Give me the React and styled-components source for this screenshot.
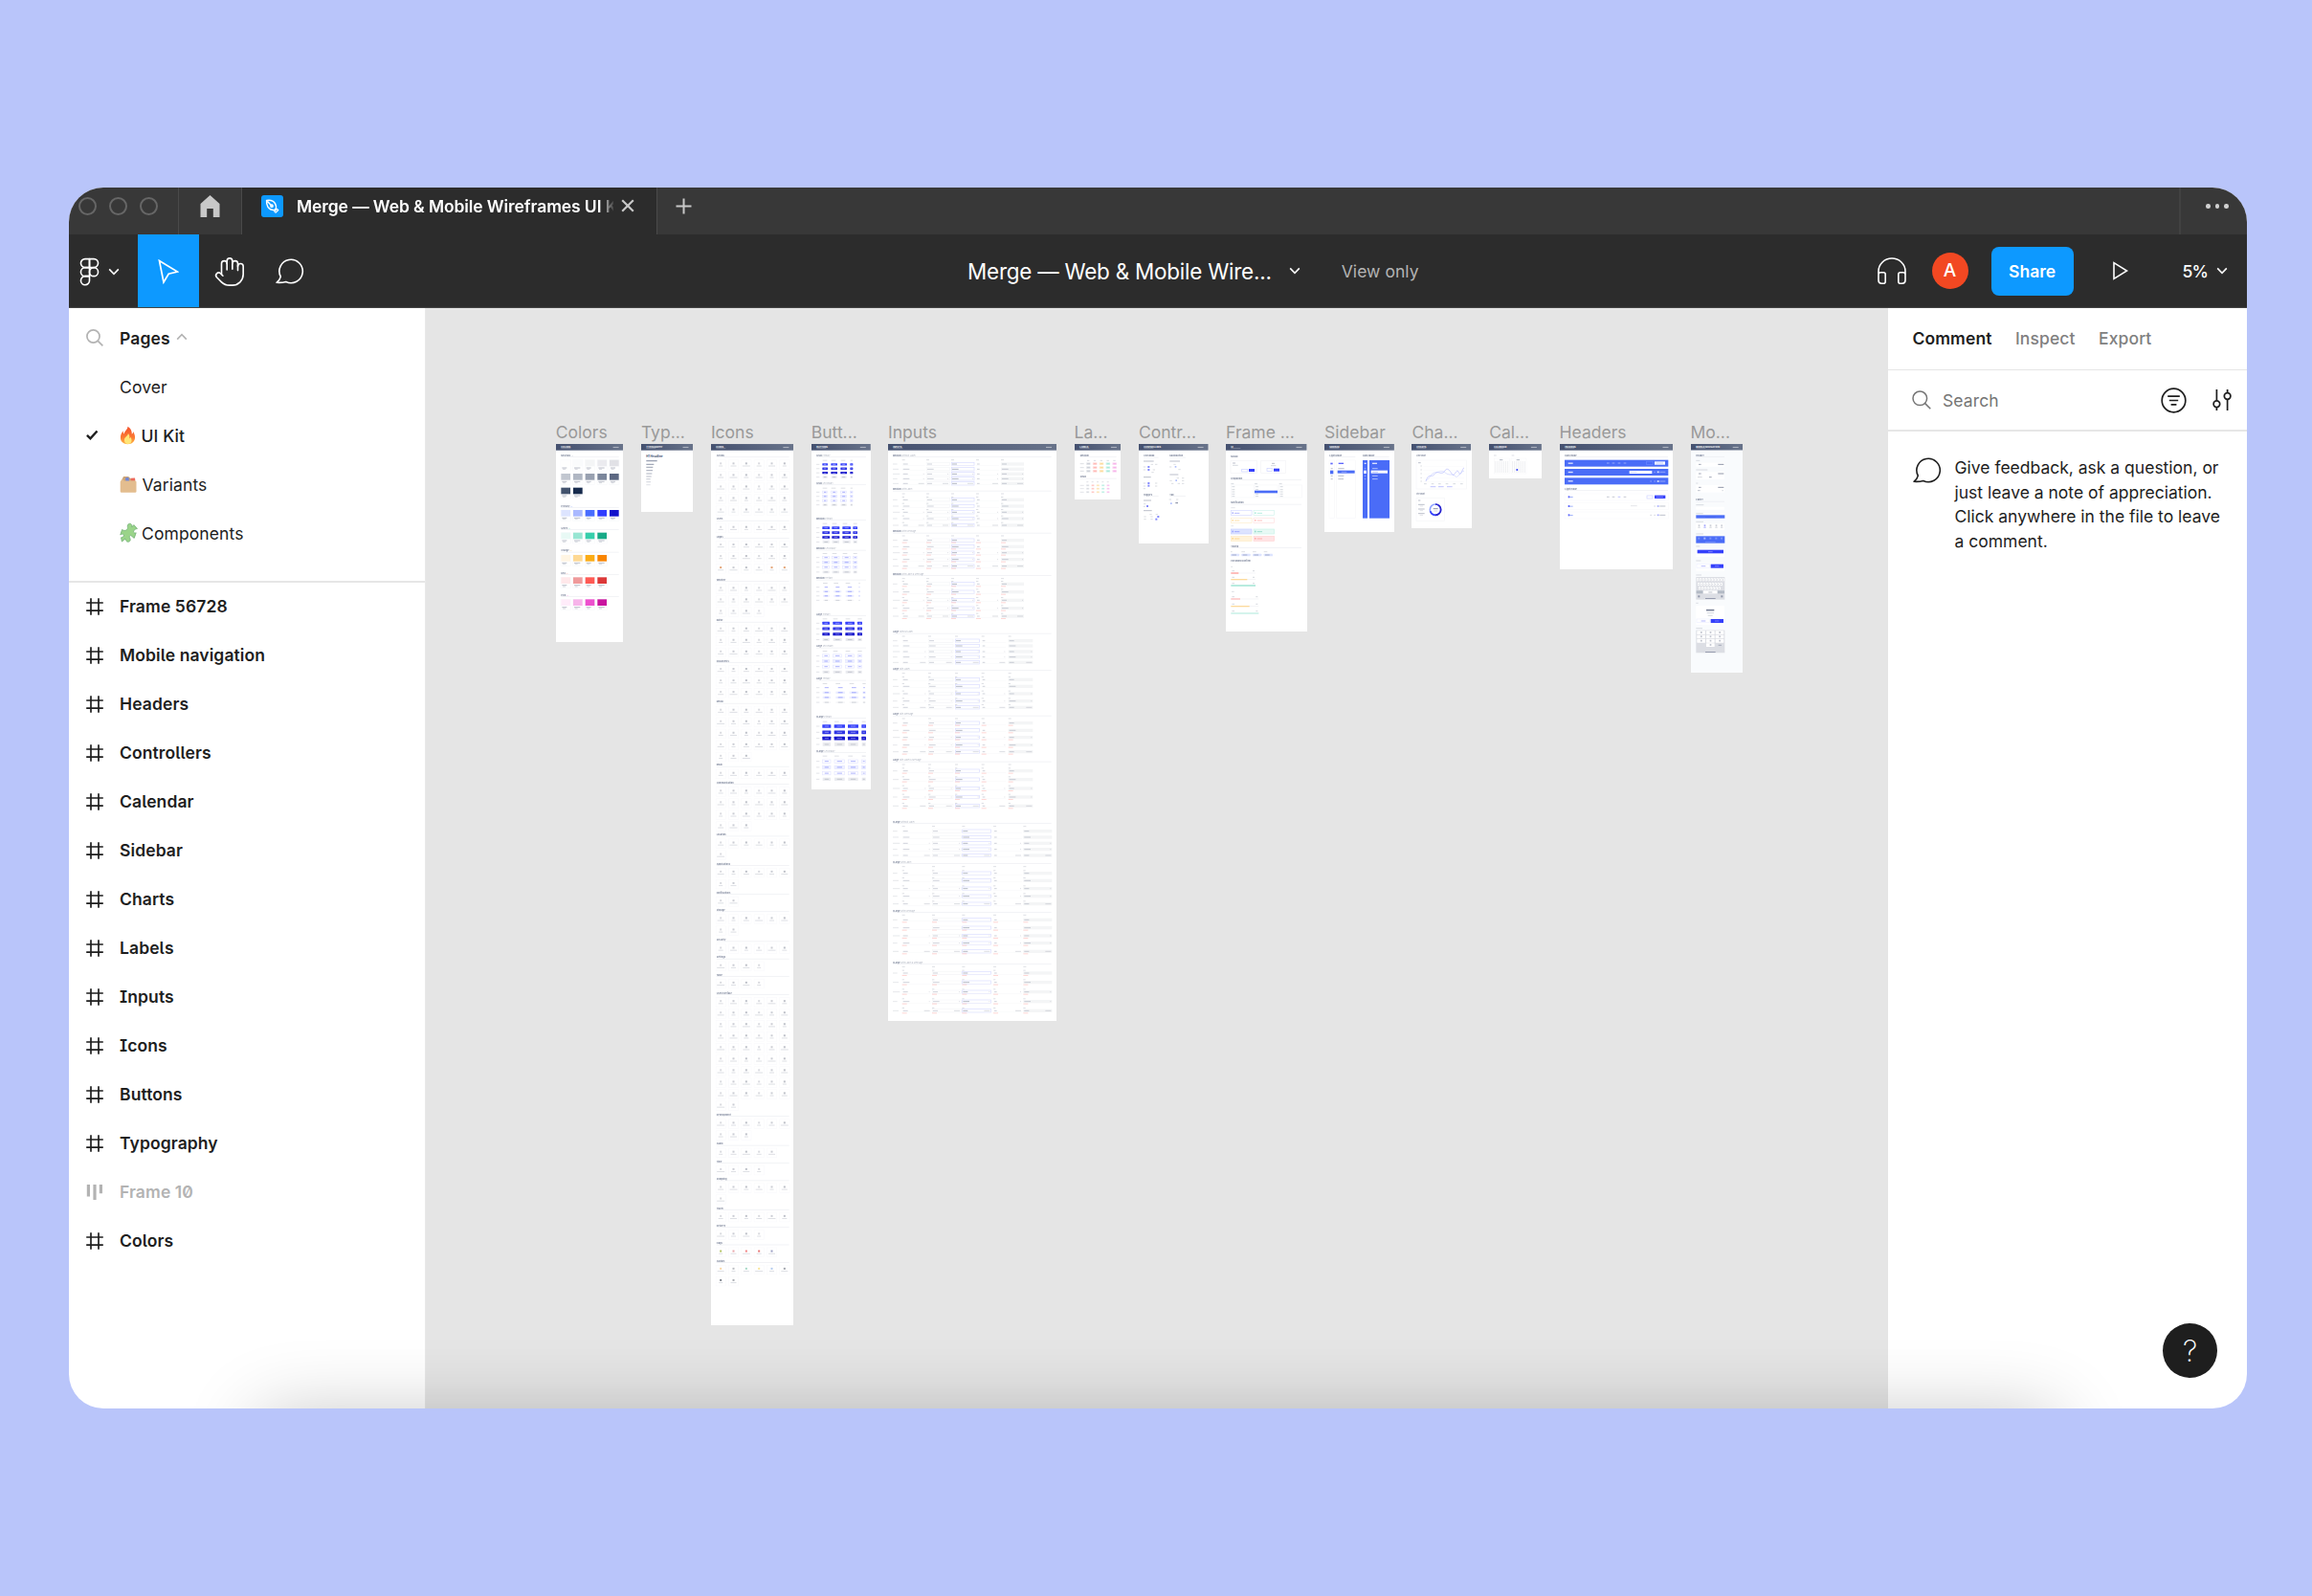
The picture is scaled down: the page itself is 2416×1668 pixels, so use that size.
import React from "react";
import styled, { createGlobalStyle } from "styled-components";
import { Figma, Hand } from "lucide-react";

const GlobalStyle = createGlobalStyle`
  * { box-sizing: border-box; }
  body {
    margin: 0;
    background: #b9c5fa;
    font-family: Inter, "Liberation Sans", sans-serif;
    font-size: 17.5px;
    color: #1e1e1e;
  }
  svg { display: block; flex: none; }
`;

/* ---------- data ---------- */

const pages = [
  { name: "Cover" },
  { name: "UI Kit", icon: "fire", current: true },
  { name: "Variants", icon: "box" },
  { name: "Components", icon: "puzzle" },
];

const layers = [
  "Frame 56728", "Mobile navigation", "Headers", "Controllers", "Calendar", "Sidebar", "Charts",
  "Labels", "Inputs", "Icons", "Buttons", "Typography", "Frame 10", "Colors",
];

const blue = "#4a6cf7";
const royal = "#3540fb";
const navy = "#1414cc";
const ink = "#44506f";

// section name, top, swatches
const swatches = [
  ["Primary", 297, 309, ["#dde4ff", "#aab9ff", "#486cff", "#313dff", "#1111cc"], "#486cff"],
  ["Green", 367, 380, ["#e8f9f5", "#98e6d3", "#36cfab", "#17aa87"], "#36cfab"],
  ["Orange", 437, 450, ["#fff5e3", "#fed993", "#fbac15", "#f98500"], "#fbac15"],
  ["Red", 507, 520, ["#ffe8ea", "#ef9a9b", "#ff5a54", "#dc3838"], "#ff5a54"],
  ["Pink", 576, 589, ["#ffecfa", "#f7b5ea", "#ed50ce", "#c9149f"], "#ed50ce"],
];

// section name, y of the heading, number of icons
const iconSections = [
  ["Arrows", 12.3, 30], ["Users", 78.7, 6], ["Logos", 97, 18], ["Weather", 142.3, 16],
  ["Editor", 184.7, 18], ["Documents", 227, 18], ["Media", 269.7, 27], ["Email", 335.7, 6],
  ["Communication", 354.3, 21], ["Location", 408.5, 7], ["Applications", 438.9, 8],
  ["Notifications", 469.2, 2], ["Storage", 487.4, 8], ["Security", 518.5, 6], ["Settings", 536.7, 4],
  ["Table", 554.9, 4], ["User interface", 574.2, 56], ["Development", 701.4, 9], ["Audio", 731.7, 5],
  ["Time", 749.9, 4], ["Shopping", 768.5, 7], ["Travel", 798.9, 6], ["Delivery", 817.4, 4],
  ["Flags", 835.6, 5], ["Avatars", 853.9, 8],
];
const flagColors = ["#9ab030", "#e08a8f", "#ec5a5a", "#e04848", "#7a7fb0"];
const avatarColors = ["#f8ca88", "#a5a8ad", "#86cbb2", "#f6dc78", "#98b8ea", "#808590", "#555b68", "#8c9098"];

const smallCols = [[897, 15], [924, 18], [954, 18], [984, 7]];
const midCols = [[897, 21], [927, 22], [960, 24], [993, 12]];
const bigCols = [[897, 21], [930, 27], [969, 27], [1007, 13]];
const textCols = [[897, 25], [938, 29], [981, 28], [1022, 10]];
const hugeCols = [[897, 25], [934, 32], [977, 31], [1020, 12]];
const buttonGroups = [
  ["Small", "Primary", 139, 166, 13.3, 7, smallCols, "solid"],
  ["Small", "Secondary", 226, 253, 13.3, 7, smallCols, "line"],
  ["Medium", "Primary", 337, 365, 14.8, 8, midCols, "solid"],
  ["Medium", "Secondary", 431, 458, 15.2, 8, midCols, "line"],
  ["Medium", "Tertiary", 524, 551, 13.7, 4, [[898, 20], [932, 24], [969, 26], [1010, 4]], "text"],
  ["Large", "Primary", 636, 664, 17.2, 9, bigCols, "solid"],
  ["Large", "Secondary", 737, 766, 17, 9, bigCols, "line"],
  ["Large", "Tertiary", 839, 866, 15.4, 5, textCols, "text"],
  ["XLarge", "Primary", 958, 987, 19, 11, hugeCols, "solid"],
  ["XLarge", "Secondary", 1066, 1097, 18.7, 10, hugeCols, "line"],
];

const inCols = {
  Medium: [98, 174, 252, 330, 408, 72],
  Large: [98, 180, 264, 347, 431, 77],
  XLarge: [98, 192, 286, 384, 478, 90],
};
// size, note, heading y, field rows, has label, has message
const inputGroups = [
  ["Medium", "Without Label", 139, [165, 181, 196, 211, 226], 0, 0],
  ["Medium", "With Label", 245, [277, 297, 316, 336, 357], 1, 0],
  ["Medium", "With Message", 377, [404, 424, 443, 464, 485], 0, 1],
  ["Medium", "With Label & Message", 511, [541, 566, 592, 617, 642], 1, 1],
  ["Large", "Without Label", 692, [719, 735, 753, 770, 787], 0, 0],
  ["Large", "With Label", 808, [841, 862, 885, 908, 928], 1, 0],
  ["Large", "With Message", 950, [977, 1000, 1022, 1046, 1067], 0, 1],
  ["Large", "With Label & Message", 1094, [1127, 1154, 1182, 1209, 1237], 1, 1],
  ["XLarge", "Without Label", 1288, [1316, 1335, 1354, 1373, 1392], 0, 0],
  ["XLarge", "With Label", 1414, [1448, 1471, 1496, 1520, 1544], 1, 0],
  ["XLarge", "With Message", 1566, [1594, 1619, 1644, 1667, 1693], 0, 1],
  ["XLarge", "With Label & Message", 1728, [1761, 1790, 1820, 1850, 1879], 1, 1],
];

/* ---------- board thumbnails, drawn at 3 units per pixel ---------- */

const R = ({ x, y, w, h, c, r = 0, line, o }) => (
  <rect x={x} y={y} width={w} height={h} rx={r} fill={c || "none"} stroke={line} strokeWidth={line ? 2 : 0} opacity={o} />
);
// a run of copy too small to read
const Copy = ({ x, y, w, c = "#8e95a6", o = 0.36, h = 3 }) => <rect x={x} y={y - h / 2} width={w} height={h} fill={c} opacity={o} />;

const Head = ({ x, y, children, note, to, size = 7, c }) => (
  <>
    <text x={x} y={y + 2} fontSize={size} fontWeight="700" fill={ink} opacity="0.7">
      {children}
      {note && <tspan fontWeight="400" fill={c || "#8e95a6"}> {note}</tspan>}
    </text>
    {to && <rect x={x} y={y + 3.5} width={to - x} height="1.6" fill="#e6e8ee" />}
  </>
);

const ColorsBoard = () => {
  const card = (c, x, y, i) => (
    <g key={x + "-" + y}>
      <R x={x} y={y} w={31} h={34} c="#fff" line="#f8f9fb" />
      <R x={x + 1} y={y} w={29} h={20} c={c} />
      <Copy x={x + 4} y={y + 25} w={15 + (i % 2) * 4} c={ink} />
      <Copy x={x + 6} y={y + 29} w={9} />
    </g>
  );
  return (
    <>
      <Head x={77} y={139} to={258} note="—">Neutrals</Head>
      {["#fefefe", "#fafbfc", "#f4f5f6", "#ebebef", "#e1e1e6"].map((c, i) => card(c, 76 + i * 38, 152, i))}
      {["#c1c6d0", "#b0b7c3", "#98a0b0", "#7b869b", "#5c6882"].map((c, i) => card(c, 76 + i * 38, 195, i))}
      {["#42526d", "#172b4d"].map((c, i) => card(c, 76 + i * 38, 239, i))}
      {swatches.map(([name, y, top, list, tone]) => (
        <g key={name}>
          <Head x={77} y={y} to={258} note="—" c={tone}>{name}</Head>
          {list.map((c, i) => card(c, 76 + i * 38, top, i))}
        </g>
      ))}
    </>
  );
};

const TypeBoard = () => (
  <>
    <text x="345" y="144" fontSize="9" fontWeight="700" fill={ink}>H1 Headline</text>
    {[[155, 34], [166, 24], [175, 21], [185, 20], [195, 18], [204, 16], [212, 13], [221, 14], [230, 13]].map(([y, w], i) => (
      <Copy key={y} x={345} y={y} w={w} h={3.4} c={ink} o={0.6 - i * 0.055} />
    ))}
  </>
);

const IconsBoard = () => (
  <>
    {iconSections.map(([name, top, count]) => {
      const y = top * 3 + 102;
      return (
        <g key={name}>
          <Head x={564} y={y} to={792}>{name}</Head>
          {Array.from({ length: count }, (_, i) => {
            const cx = 577.5 + (i % 6) * 40;
            const cy = y + 27 + Math.floor(i / 6) * 36.1;
            let tone = "#666d80";
            if (name === "Flags") tone = flagColors[i];
            if (name === "Avatars") tone = avatarColors[i];
            if (name === "Logos" && (i === 12 || i === 16 || i === 17)) tone = "#d9854a";
            const w = 12 + ((i * 7 + count) % 5) * 3;
            return (
              <g key={i}>
                <R x={cx - 15} y={cy - 14} w={31} h={29} c="#fff" line="#fafafc" />
                <R x={cx - 3} y={cy - 6} w={6} h={6} c={tone} o={tone === "#666d80" ? 0.25 + (i % 3) * 0.09 : 0.75} />
                <Copy x={cx - w / 2} y={cy + 5} w={w} o={0.3} />
              </g>
            );
          })}
        </g>
      );
    })}
  </>
);

const ButtonsBoard = () => (
  <>
    {buttonGroups.map(([size, kind, top, first, step, h, cols, look]) => (
      <g key={size + kind}>
        <Head x={877} y={top} to={1033} note={kind} size={6.6}>{size}</Head>
        {cols.map(([x, w]) => <Copy key={x} x={x} y={top + 14.5} w={Math.min(w, 14)} o={0.3} />)}
        {[0, 1, 2, 3].map((row) => {
          const y = first + row * step;
          return (
            <g key={row}>
              <Copy x={877} y={y} w={10} o={0.25} />
              {cols.map(([x, w]) => {
                const inner = <Copy x={x + w * 0.25} y={y} w={w * 0.5} c={look === "solid" && row < 3 ? "#fff" : row === 3 ? "#8e95a6" : royal} o={0.4} />;
                if (row === 3) return <g key={x}><R x={x} y={y - h / 2} w={w} h={h} c={look === "text" ? "#f7f7f9" : "#eaebef"} />{inner}</g>;
                if (look === "solid") return <g key={x}><R x={x - 1} y={y - h / 2} w={w + 2} h={h} r={1} c={[royal, "#3036e6", navy][row]} />{inner}</g>;
                if (look === "line") return <g key={x}><R x={x} y={y - h / 2} w={w} h={h} c={row === 1 ? "#eef0ff" : "#fff"} line="#e4e6ff" />{inner}</g>;
                return <g key={x}><R x={x} y={y - h / 2 - 1} w={w} h={h + 2} c={row ? "#eceeff" : "#fff"} />{inner}</g>;
              })}
            </g>
          );
        })}
      </g>
    ))}
  </>
);

const InputsBoard = () => (
  <>
    {inputGroups.map(([size, note, top, rows, label, message]) => {
      const w = inCols[size][5];
      const xs = inCols[size].slice(0, 5);
      return (
        <g key={size + note}>
          <Head x={69} y={top} to={566} note={note} size={6.6}>{size}</Head>
          {xs.map((x) => <Copy key={x} x={x} y={top + 13} w={9} o={0.3} />)}
          {rows.map((y, r) => (
            <g key={y}>
              <Copy x={69} y={y} w={14 + (r % 3) * 4} o={0.22} />
              {xs.map((x, i) => (
                <g key={x}>
                  {i === 1 && <R x={x + 1} y={y - 5} w={w} h={10} line="#f5f6f8" />}
                  {i === 2 && <R x={x + 1} y={y - 5} w={w - 1} h={10} c="#fff" line="#d9dcff" />}
                  {i === 4 && <R x={x} y={y - 5} w={w} h={10} c="#f4f5f6" />}
                  {i !== 4 && <R x={x} y={y + 4} w={w} h={1.2} c="#f4f5f7" />}
                  <Copy x={x + 3} y={y} w={i === 3 ? 8 : 15 + (r % 2) * 5} c={ink} o={i === 2 ? 0.4 : 0.25} />
                  {r === 4 && <Copy x={x + w - 21} y={y} w={18} o={0.32} />}
                  {r > 1 && r < 4 && <Copy x={x + w - 6} y={y} w={3} o={0.28} />}
                  {label > 0 && <Copy x={x} y={y - 8.5} w={7} o={0.3} />}
                  {message > 0 && <Copy x={x} y={y + 7.5} w={15} c="#ff5a54" o={0.25} />}
                </g>
              ))}
            </g>
          ))}
        </g>
      );
    })}
  </>
);

const LabelsBoard = () => {
  const tones = ["#8e95a6", "#ff5a54", "#fbac15", "#36cfab", "#ed50ce"];
  return (
    <>
      <Head x={654} y={139} to={768}>Medium</Head>
      <Head x={654} y={206} to={768}>Small</Head>
      {[164, 176, 187].map((y) => (
        <g key={y}>
          <Copy x={654} y={y} w={12} o={0.3} />
          {tones.map((c, i) => <g key={c}><R x={673 + i * 20.5} y={y - 4} w={14} h={8} r={2} c={c} o={0.2} /><Copy x={676 + i * 20.5} y={y} w={9} c={c} o={0.33} /></g>)}
        </g>
      ))}
      {[232, 242, 253].map((y) => (
        <g key={y}>
          <Copy x={654} y={y} w={12} o={0.25} />
          {tones.map((c, i) => <g key={c}><R x={673 + i * 16} y={y - 3} w={10} h={6} r={2} c={c} o={0.17} /><Copy x={675 + i * 16} y={y} w={6} c={c} o={0.22} /></g>)}
        </g>
      ))}
      {tones.map((c, i) => <Copy key={c} x={676 + i * 20.5} y={154} w={7} o={0.35} />)}
      {tones.map((c, i) => <Copy key={c} x={674 + i * 16} y={221} w={6} o={0.28} />)}
    </>
  );
};

const ControlsBoard = () => (
  <>
    <Head x={855} y={140} to={902}>Checkbox</Head>
    <Head x={937} y={140} to={987}>Radiobutton</Head>
    <Head x={855} y={262} to={902}>Toggles</Head>
    <Head x={937} y={262} to={987}>Tab</Head>
    {[[855, 156, 32], [937, 156, 32], [855, 206, 23], [937, 198, 27], [855, 279, 24], [855, 311, 26]].map(([x, y, w]) => (
      <Copy key={x + "-" + y} x={x} y={y} w={w} c={ink} />
    ))}
    {[[857, 174], [857, 183], [857, 225], [857, 234], [857, 242], [883, 191], [887, 183], [894, 225], [894, 234], [881, 166], [894, 166], [939, 174], [952, 166], [967, 182], [940, 217], [945, 226], [962, 209], [978, 209], [978, 217], [965, 226], [978, 226], [938, 276], [960, 276], [858, 290], [857, 298], [859, 330], [859, 338], [877, 323], [880, 330], [880, 338], [896, 323]].map(([x, y], i) => (
      <Copy key={i} x={x - 3} y={y} w={7} o={0.32} />
    ))}
    {[[868, 171], [868, 180], [868, 222], [868, 230], [864, 294], [898, 327], [892, 335]].map(([x, y]) => <R key={x + "-" + y} x={x} y={y} w={6} h={6} c={royal} o={0.6} />)}
    {[[953, 171], [955, 214], [939, 286]].map(([x, y]) => <R key={x} x={x} y={y} w={5} h={5} c={blue} o={0.45} />)}
    <Copy x={955} y={287} w={8} c={ink} o={0.7} />
  </>
);

const ModalsBoard = () => (
  <>
    <Head x={79} y={141}>Modal</Head>
    <Head x={79} y={211} to={300}>Dropdown</Head>
    <Head x={79} y={287} to={300}>Notification</Head>
    <Head x={79} y={423} to={300}>Tooltip</Head>
    <Head x={79} y={470}>Password confirm</Head>
    <R x={78} y={154} w={82} h={40} line="#f3f4f6" />
    <R x={173} y={154} w={77} h={40} line="#f3f4f6" />
    <Copy x={84} y={162} w={9} c={ink} /><Copy x={84} y={169} w={17} /><Copy x={207} y={163} w={9} c={ink} /><Copy x={204} y={170} w={16} />
    <R x={113} y={181} w={18} h={8} line="#cdd2ff" /><R x={135} y={180} w={18} h={9} c={royal} />
    <R x={192} y={179} w={17} h={8} line="#cdd2ff" /><R x={213} y={179} w={18} h={9} c={royal} />
    {[79, 153, 230].map((x) => (
      <g key={x}>
        <Copy x={x} y={227} w={9} />
        <R x={x} y={231} w={72} h={39} line="#f6f7f9" />
        {[236, 245, 252, 259, 266].map((y) => <Copy key={y} x={x + 3} y={y} w={9} />)}
      </g>
    ))}
    <R x={153} y={248} w={72} h={8} c={blue} />
    <Copy x={79} y={302} w={13} o={0.25} /><Copy x={79} y={359} w={8} o={0.25} />
    {[
      [78, 311, "#d6daff", "#fff", royal], [149, 311, "#d3f4ec", "#fff", "#36cfab"], [78, 334, "#feedcc", "#fff", "#fbac15"], [149, 334, "#ffe0e0", "#fff", "#ff5a54"],
      [78, 369, "#c7d0ff", "#dde4ff", royal], [149, 369, "#c9f2e7", "#e8f9f5", "#17aa87"], [78, 391, "#feeac3", "#fff3db", "#fbac15"], [149, 391, "#ffd4d4", "#ffe4e5", "#ff5a54"],
    ].map(([x, y, line, c, dot]) => (
      <g key={x + "-" + y}>
        <R x={x + 1} y={y} w={65} h={15} c={c} line={line} />
        <R x={x + 5} y={y + 5} w={3} h={5} c={dot} o={0.6} />
        <Copy x={x + 12} y={y + 8} w={16} c={dot} />
      </g>
    ))}
    {[78, 112, 147, 182].map((x, i) => (
      <g key={x}><Copy x={x} y={440} w={i ? 11 : 5} o={0.3} /><R x={x} y={446} w={i ? 28 : 27} h={8} r={2} c="#dde4ff" /><Copy x={x + 4} y={450} w={14} c={ink} /></g>
    ))}
    <Copy x={79} y={487} w={5} o={0.3} /><Copy x={81} y={565} w={8} o={0.3} />
    {[[500, 77, 24, "#ff9f9c"], [520, 77, 51, "#fcda9c"], [539, 77, 77, "#98e3d1"], [581, 87, 29, "#ffc0bf"], [604, 87, 58, "#fcda9c"], [626, 87, 87, "#c3f0e5"]].map(([y, w, fill, c]) => (
      <g key={y}>
        <Copy x={82} y={y} w={8} /><Copy x={70 + w} y={y} w={6} />
        <R x={79} y={y + 6} w={w} h={2} c="#f0f1f4" />
        <R x={79} y={y + 5} w={fill} h={4} c={c} />
      </g>
    ))}
  </>
);

const SidebarBoard = () => (
  <>
    <Head x={388} y={139} to={469}>Light Mode</Head>
    <Head x={492} y={139} to={575}>Dark Mode</Head>
    <R x={387} y={153} w={17} h={181} line="#f8f8fa" /><R x={409} y={153} w={61} h={181} line="#f8f8fa" />
    <R x={492} y={153} w={15} h={182} c={blue} /><R x={513} y={153} w={63} h={182} c={blue} />
    <R x={391} y={161} w={7} h={5} c={royal} o={0.8} /><Copy x={416} y={163} w={16} c={royal} o={0.8} h={4} />
    <Copy x={497} y={163} w={6} c="#fff" o={0.8} h={4} /><Copy x={522} y={163} w={15} c="#fff" o={0.8} h={4} />
    <R x={390} y={185} w={10} h={11} c={blue} /><R x={413} y={185} w={54} h={9} c={blue} />
    <R x={495} y={185} w={9} h={10} c="#e3e8ff" /><R x={518} y={185} w={52} h={9} c="#fff" />
    <Copy x={425} y={190} w={17} c="#fff" /><Copy x={522} y={190} w={18} c={blue} />
    {[179, 202, 212].map((y, i) => (
      <g key={y}><Copy x={392} y={y} w={6} c={ink} /><Copy x={415} y={y} w={19 - i} c={ink} /><Copy x={497} y={y} w={5} c="#fff" /><Copy x={522} y={y} w={17} c="#fff" o={0.55} /></g>
    ))}
  </>
);

const ChartsBoard = () => (
  <>
    <Head x={662} y={139} size={6}>Line chart</Head>
    <Head x={662} y={260} size={6}>Pie chart</Head>
    <R x={661} y={153} w={157} h={90} line="#f5f6f8" />
    <R x={661} y={271} w={89} h={73} line="#f5f6f8" />
    <Copy x={667} y={161} w={8} c={ink} /><Copy x={667} y={279} w={7} c={ink} />
    {[171, 183, 195, 208, 219].map((y) => <g key={y}><Copy x={674} y={y} w={5} o={0.3} /><R x={683} y={y} w={128} h={1} c="#f4f5f8" /></g>)}
    {[685, 708, 730, 753, 776, 799].map((x) => <Copy key={x} x={x} y={227} w={8} />)}
    {[705, 730, 757].map((x) => <Copy key={x} x={x} y={236} w={17} c={royal} o={0.3} />)}
    <path d="M691 219C700 190 708 210 718 197C730 180 739 206 752 184C759 176 764 183 772 195C781 213 787 170 795 193C801 205 805 180 811 176" fill="none" stroke={royal} strokeWidth="1.3" opacity="0.5" />
    <path d="M691 216C704 213 706 192 722 191C735 190 742 184 753 193C767 203 776 193 784 204C793 210 800 184 811 188" fill="none" stroke="#b8c0ff" strokeWidth="1.4" />
    <circle cx="721" cy="308" r="17" fill="none" stroke="#8fa4ff" strokeWidth="5" />
    <path d="M721 291A17 17 0 0 1 721 325" fill="none" stroke="#2a22cc" strokeWidth="5" />
    <path d="M721 325A17 17 0 0 1 705 313" fill="none" stroke={royal} strokeWidth="5" />
    <Copy x={714} y={305} w={15} c={ink} o={0.6} /><Copy x={716} y={312} w={11} />
    {[292, 306, 320].map((y) => <g key={y}><Copy x={667} y={y} w={20} c={ink} /><Copy x={672} y={y + 5} w={10} o={0.25} /></g>)}
  </>
);

const CalendarBoard = () => (
  <>
    <Copy x={33} y={138} w={8} o={0.3} /><Copy x={89} y={138} w={8} o={0.3} />
    {[34, 87].map((x) => (
      <g key={x}>
        <R x={x} y={147} w={48} h={48} line="#f8f8fa" />
        <Copy x={x + 17} y={152} w={10} c={ink} o={0.4} />
        {[159, 165, 171, 177, 183, 189].map((y) => [0, 1, 2, 3, 4, 5, 6].map((i) => <Copy key={y + "-" + i} x={x + 3 + i * 6.4} y={y} w={3} o={0.35} h={2.5} />))}
      </g>
    ))}
    <R x={103} y={180} w={6} h={6} r={3} c={royal} />
  </>
);

const HeadersBoard = () => (
  <>
    <Head x={254} y={139} to={577}>Dark mode</Head>
    <Head x={254} y={244} to={577}>Light mode</Head>
    {[152, 180, 208].map((y) => (
      <g key={y}><R x={253} y={y} w={325} h={21} c={blue} /><Copy x={264} y={y + 10.5} w={15} c="#fff" o={0.8} h={4} /></g>
    ))}
    {[258, 287, 315].map((y) => (
      <g key={y}><R x={253} y={y} w={325} h={21} c="#fff" line="#f9f9fb" /><R x={264} y={y + 7} w={5} h={6} c={royal} o={0.8} /><Copy x={269} y={y + 10.5} w={10} c={blue} o={0.5} /></g>
    ))}
    {[385, 402, 420, 438].map((x, i) => (
      <g key={x}><Copy x={x} y={162} w={8} c="#fff" o={0.4} /><Copy x={x} y={268} w={8} c={i === 2 ? royal : ink} o={0.3} /></g>
    ))}
    <R x={510} y={157} w={20} h={10} line="#6b88ff" /><R x={535} y={157} w={33} h={10} c="#fff" /><Copy x={540} y={162} w={22} c={blue} />
    <R x={511} y={264} w={18} h={9} line="#cdd2ff" /><R x={535} y={263} w={34} h={10} c={royal} /><Copy x={540} y={268} w={22} c="#fff" />
    <R x={456} y={186} w={71} h={9} c="#fff" /><Copy x={460} y={190} w={20} c={blue} o={0.25} /><Copy x={460} y={296} w={20} o={0.25} />
    {[190, 219].map((y) => <g key={y}>{y === 219 && <Copy x={521} y={y} w={5} c="#fff" />}<Copy x={533} y={y} w={5} c="#fff" /><Copy x={543} y={y} w={6} c="#fff" o={0.8} h={5} /><Copy x={551} y={y} w={18} c="#fff" o={0.4} /></g>)}
    {[297, 325].map((y) => <g key={y}>{y === 325 && <Copy x={521} y={y} w={5} />}<Copy x={533} y={y} w={5} /><Copy x={543} y={y} w={6} c={royal} o={0.4} h={5} /><Copy x={551} y={y} w={18} c={ink} o={0.35} /></g>)}
  </>
);

const MobileBoard = () => (
  <>
    <R x={48} y={122} w={164} h={700} c="#f9fbfd" />
    <Head x={64} y={138} to={153}>Header</Head>
    <Head x={64} y={278} to={153}>Footer</Head>
    {[[154, 12], [183, 36], [225, 6], [293, 24], [320, 22], [346, 23], [384, 23], [423, 12], [468, 15], [513, 17], [601, 7], [680, 20]].map(([y, w]) => <Copy key={y} x={64} y={y} w={w} o={0.3} />)}
    {[[161, 12], [190, 23], [231, 23], [299, 9], [352, 20], [431, 25], [476, 24]].map(([y, h]) => <R key={y} x={64} y={y} w={89} h={h} c="#fff" />)}
    {[166, 195, 238].map((y) => <g key={y}><Copy x={72} y={y} w={8} c={ink} o={0.5} /><Copy x={133} y={y} w={18} c={ink} o={0.6} /></g>)}
    <Copy x={69} y={206} w={14} /><Copy x={105} y={206} w={8} c={ink} o={0.5} /><Copy x={69} y={248} w={8} c={ink} /><Copy x={145} y={248} w={5} />
    <R x={64} y={325} w={90} h={10} c={blue} /><Copy x={93} y={331} w={32} c="#2b48cc" h={1.5} />
    {[73, 91, 109, 127, 144].map((x, i) => <g key={x}><R x={x - 2} y={355} w={5} h={6} c={i === 1 ? royal : "#8e95a6"} o={0.45} /><Copy x={x - 3} y={364} w={7} c={i === 1 ? royal : "#8e95a6"} /></g>)}
    <R x={64} y={391} w={90} h={22} c={blue} />
    {[73, 91, 109, 127, 144].map((x, i) => <R key={x} x={x - 3} y={395} w={6} h={6} c="#fff" o={i === 1 ? 0.5 : 0.25} />)}
    <Copy x={93} y={410} w={32} c="#fff" h={1.5} />
    <R x={68} y={434} w={82} h={11} c={royal} /><Copy x={102} y={440} w={14} c="#fff" />
    {[485, 657].map((y) => (
      <g key={y}>{y === 657 && <R x={64} y={609} w={89} h={60} c="#fff" />}<R x={66} y={y - 6} w={41} h={11} line="#eef0ff" /><Copy x={80} y={y} w={14} c={royal} /><R x={110} y={y - 6} w={40} h={12} c={royal} /><Copy x={123} y={y} w={13} c="#fff" o={0.3} /></g>
    ))}
    <R x={64} y={519} w={90} h={71} c="#dcdee4" />
    {[523, 537, 550].map((y, r) => Array.from({ length: 10 - r }, (_, i) => <g key={y + "-" + i}><R x={66 + r * 3 + i * 8.8} y={y} w={7} h={9} r={1} c="#fff" /><Copy x={68 + r * 3 + i * 8.8} y={y + 5} w={2.5} c={ink} /></g>))}
    <R x={65} y={562} w={20} h={9} c="#b3bac5" /><R x={87} y={562} w={43} h={9} c="#fff" /><R x={132} y={562} w={21} h={9} c="#b3bac5" />
    <Copy x={103} y={567} w={12} c={ink} /><Copy x={70} y={580} w={6} c={ink} o={0.5} h={6} /><Copy x={142} y={580} w={6} c={ink} o={0.5} h={6} /><Copy x={93} y={587} w={32} c={ink} h={2} o={0.7} />
    <Copy x={96} y={623} w={25} c={ink} h={5} o={0.7} /><Copy x={98} y={632} w={22} /><Copy x={101} y={640} w={15} />
    <R x={64} y={686} w={90} h={71} c="#dcdee4" />
    {[688, 701, 714, 727].map((y) => [67, 96, 125].map((x) => (y < 727 || x === 96 ? <g key={y + "-" + x}><R x={x} y={y} w={26} h={11} r={1} c="#fff" /><Copy x={x + 11} y={y + 5} w={5} c={ink} h={5} /></g> : null)))}
    <Copy x={134} y={733} w={10} c={ink} /><Copy x={93} y={755} w={32} c={ink} h={2} o={0.7} />
  </>
);

// label, title inside the board, width, height, left edge of its drawing
const boards = [
  ["Colors", "COLORS", 70.6, 206.5, 61, ColorsBoard],
  ["Typ...", "TYPOGRAPHY", 54.5, 70.5, 329, TypeBoard],
  ["Icons", "ICONS", 86.4, 921.3, 547, IconsBoard],
  ["Butt...", "BUTTONS", 61.8, 360.8, 862, ButtonsBoard],
  ["Inputs", "INPUTS", 176, 603.2, 54, InputsBoard],
  ["La...", "LABELS", 48.9, 58, 637, LabelsBoard],
  ["Contr...", "CONTROLLERS", 72.6, 104, 840, ControlsBoard],
  ["Frame ...", "UI", 84.5, 195.6, 63, ModalsBoard],
  ["Sidebar", "SIDEBAR", 72.9, 91.7, 372, SidebarBoard],
  ["Cha...", "CHARTS", 62.2, 88, 646, ChartsBoard],
  ["Cal...", "CALENDAR", 54.9, 35.7, 18, CalendarBoard],
  ["Headers", "HEADERS", 118.5, 130.6, 238, HeadersBoard],
  ["Mo...", "MOBILE NAVIGATION", 54.7, 238.7, 48, MobileBoard],
];

/* ---------- icons ---------- */

const Bubble = () => (
  <svg width="30" height="27" viewBox="0 0 30 27" fill="none" stroke="currentColor" strokeWidth="1.6" strokeLinejoin="round">
    <path d="M5.3 19.2A12.2 12.2 0 1 1 10.8 24.5C8 25.3 4.5 25.5 1 25.3C3.4 23.6 4.8 21.6 5.3 19.2Z" />
  </svg>
);

const Chevron = ({ up }) => (
  <svg width="12" height="8" viewBox="0 0 12 8" fill="none" stroke="currentColor" strokeWidth="1.6">
    <path d={up ? "M1.2 6.6L6 1.6L10.8 6.6" : "M1.2 1.4L6 6.4L10.8 1.4"} />
  </svg>
);

const Magnifier = ({ size = 20, weight = 1.5 }) => (
  <svg width={size} height={size} viewBox="0 0 20 20" fill="none" stroke="currentColor" strokeWidth={weight}>
    <circle cx="8.3" cy="8.3" r="7.3" />
    <path d="M13.4 13.4L19.3 19.3" />
  </svg>
);

const HashIcon = () => (
  <svg width="18" height="18" viewBox="0 0 18 18" fill="none" stroke="currentColor" strokeWidth="1.7">
    <path d="M5 0.3V17.7M13 0.3V17.7M0.2 5H17.8M0.2 13.2H17.8" />
  </svg>
);

const BarsIcon = () => (
  <svg width="18" height="18" viewBox="0 0 18 18" fill="currentColor">
    <path d="M0.8 1H4V13.6H0.8ZM7.4 1H10.6V17H7.4ZM13.8 1H17V10.2H13.8Z" />
  </svg>
);

const PageIcon = ({ kind }) => {
  if (kind === "fire") {
    return (
      <svg width="17" height="20" viewBox="0 0 18 20" preserveAspectRatio="none">
        <defs>
          <linearGradient id="flame" x1="0" y1="0" x2="0" y2="1">
            <stop offset="0" stopColor="#f4512c" /><stop offset="0.6" stopColor="#fb7a33" /><stop offset="1" stopColor="#fdb544" />
          </linearGradient>
        </defs>
        <path d="M9 0.8C8.8 4 5.5 5.6 4.8 8.6C4 7.7 3.8 6.4 4 5.2C2 7.2 0.8 10 1 13C1.3 17 4.8 19.2 8.8 19.2C13.6 19.2 17 16.4 17 12.2C17 9.6 15.9 7.7 15 6C14.9 7.3 14.4 8.2 13.6 8.8C13.6 5.6 12.2 2.2 9 0.8Z" fill="url(#flame)" />
        <path d="M9.4 8C9.4 10.6 5.2 11.5 5.2 15C5.2 17.6 7 19 9.2 19C11.6 19 13.3 17.5 13.3 15.2C13.3 13.6 12.5 12.6 12 11.7C11.8 12.6 11.4 13 10.9 13.2C11.2 11.3 10.8 9.3 9.4 8Z" fill="#ffe678" />
      </svg>
    );
  }
  if (kind === "box") {
    return (
      <svg width="18" height="20" viewBox="0 0 18 20">
        <path d="M1.5 7L4 2H9L12 4.5L16 5V10H1.5Z" fill="#cda577" />
        <path d="M6 3.4L9.4 2.8L10 7H6.4Z" fill="#6f86d8" /><path d="M11.6 3.8L16 3.4L16.4 6.4H12Z" fill="#ec6a5c" />
        <rect x="0.7" y="6.5" width="16.8" height="12.2" rx="1.2" fill="#e3bd8f" />
        <path d="M1 7.4L3 4.6L5.4 7.4Z" fill="#e3bd8f" />
      </svg>
    );
  }
  // puzzle piece, tilted, with a tab on top and bottom and a notch on each side
  return (
    <svg width="19" height="22" viewBox="0 0 19 22">
      <path d="M8.4 6.2C8.8 5.2 7.6 3.6 9 2C10.6 0.4 13 1.6 12.9 3.6L12.7 5L14.9 2.6L18.4 6.6C16.8 6.6 14.8 7.6 14.6 9.4C14.6 11 16 11.4 17.2 10.8L15.2 16.4L11.8 13.6C10.2 13.6 9.8 15.2 10.8 16.4L11.2 18.6C10.4 20.8 7.4 20.9 6.6 18.6L6 17L2.4 20L1.6 15.8C3.4 15.8 4.8 14.6 4.4 13C3.8 11.6 2 12 0.8 13L2.6 7.4C4.4 9 7.4 8.8 8.4 6.2Z" fill="#9ad489" stroke="#78b47a" strokeWidth="0.9" />
    </svg>
  );
};

/* ---------- layout ---------- */

const Page = styled.div`
  width: 2416px;
  height: 1668px;
  padding: 196px 68px 196px 72px;
  background: #b9c5fa;
`;

const Window = styled.div`
  position: relative;
  display: flex;
  flex-direction: column;
  height: 100%;
  border-radius: 36px;
  overflow: hidden;
  background: #fff;
`;

const BottomShade = styled.div`
  position: absolute;
  left: 200px;
  right: 200px;
  bottom: -108px;
  height: 100px;
  box-shadow: 0 0 80px rgba(0, 0, 0, 0.24);
  pointer-events: none;
`;

const TabBar = styled.div`
  display: flex;
  height: 49px;
  background: #383838;
  color: #c8c8c8;
`;

const Lights = styled.div`
  display: flex;
  gap: 13px;
  width: 115px;
  padding: 9.5px 0 0 10px;
  border-right: 1px solid #4a4a4a;
`;

const Light = styled.span`
  width: 19px;
  height: 19px;
  border: 2px solid #666;
  border-radius: 50%;
`;

const HomeTab = styled.div`
  display: flex;
  justify-content: center;
  width: 66px;
  padding-top: 8px;
  border-right: 1px solid #4a4a4a;
`;

const FileTab = styled.div`
  display: flex;
  width: 434px;
  padding: 8px 0 0 20px;
  background: #2c2c2c;
  border-right: 1px solid #4a4a4a;
`;

const FileBadge = styled.span`
  display: flex;
  align-items: center;
  justify-content: center;
  width: 23px;
  height: 23px;
  border-radius: 3px;
  background: #0d99ff;
`;

const FileName = styled.span`
  width: 331px;
  margin: 0 8px 0 14px;
  overflow: hidden;
  white-space: nowrap;
  color: #fff;
  font-weight: 600;
  line-height: 23px;
  letter-spacing: -0.1px;
  mask-image: linear-gradient(90deg, #000 316px, transparent 333px);
`;

const NewTab = styled.div`
  padding: 11px 0 0 19px;
`;

const MoreTabs = styled.div`
  display: flex;
  gap: 5px;
  width: 71px;
  margin-left: auto;
  padding: 17px 0 0 26px;
  border-left: 2px solid #424242;
`;

const Dot = styled.span`
  width: 4.6px;
  height: 4.6px;
  border-radius: 50%;
  background: #d0d0d0;
`;

const Toolbar = styled.div`
  display: grid;
  grid-template-columns: 939px 1fr auto;
  align-items: center;
  height: 77px;
  background: #2c2c2c;
  border-bottom: 1px solid #444;
  color: #fff;
`;

const Tools = styled.div`
  display: flex;
  height: 100%;
`;

const MenuButton = styled.div`
  display: flex;
  align-items: center;
  gap: 4px;
  width: 72px;
  padding: 1px 0 0 6px;
`;

const Tool = styled.div`
  display: flex;
  align-items: center;
  justify-content: center;
  width: ${({ $active }) => ($active ? "64px" : "63.5px")};
  padding-top: 1px;
  background: ${({ $active }) => ($active ? "#0d99ff" : "transparent")};
`;

const FileTitle = styled.div`
  display: flex;
  align-items: center;
  font-size: 22.4px;
  white-space: nowrap;
  letter-spacing: -0.2px;

  svg { margin-left: 18px; }
`;

const ViewOnly = styled.span`
  margin-left: 43px;
  font-size: 17.5px;
  letter-spacing: 0.05px;
  color: #b3b3b3;
`;

const Actions = styled.div`
  display: flex;
  align-items: center;
  padding-right: 20px;
  font-weight: 500;
`;

const Avatar = styled.span`
  width: 38px;
  height: 38px;
  margin: 0 24px 0 27px;
  border-radius: 50%;
  background: #f24822;
  font-size: 19px;
  line-height: 38px;
  text-align: center;
`;

const ShareButton = styled.button`
  width: 86px;
  height: 51px;
  margin-right: 41px;
  padding: 0;
  border: 0;
  border-radius: 8px;
  background: #0d99ff;
  color: #fff;
  font: 600 17.5px Inter, sans-serif;
`;

const Zoom = styled.span`
  margin: 0 9px 0 57px;
  letter-spacing: -0.9px;
`;

const Body = styled.div`
  display: flex;
  flex: 1;
  min-height: 0;
`;

const LeftPanel = styled.aside`
  width: 373px;
  border-right: 1px solid #e9e9e9;
`;

const Pages = styled.div`
  padding: 6.5px 0 23.5px;
  border-bottom: 2px solid #e6e6e6;
`;

const Row = styled.div`
  display: flex;
  align-items: center;
  height: 51px;
  padding-bottom: 1.5px;
  color: ${({ $muted }) => ($muted ? "#b3b3b3" : "#1e1e1e")};
  font-weight: ${({ $bold, $current }) => ($bold ? 600 : $current ? 500 : 400)};
  letter-spacing: 0.1px;
  font-feature-settings: ${({ $layer }) => ($layer ? '"ss02"' : "normal")};
`;

const RowIcon = styled.span`
  width: 35px;
  margin-left: 18px;
  color: ${({ $faint }) => ($faint ? "#b3b3b3" : "inherit")};
`;

const RowName = styled.span`
  margin-left: ${({ $icon }) => ($icon === "puzzle" ? "4px" : $icon ? "5.5px" : "0")};
`;

const PagesToggle = styled.span`
  margin: -2px 0 0 6px;
  color: #b3b3b3;
`;

const Canvas = styled.main`
  flex: 1;
  padding: 119px 0 0 135.8px;
  background: #e5e5e5;
`;

const BoardRow = styled.div`
  display: flex;
  align-items: flex-start;
  gap: 18.5px;
`;

const Board = styled.figure`
  flex: none;
  margin: 0;
`;

const BoardName = styled.figcaption`
  height: 23px;
  line-height: 22px;
  color: #999;
  white-space: nowrap;
`;

const BoardArt = styled.svg`
  background: #fff;
`;

const RightPanel = styled.aside`
  display: flex;
  flex-direction: column;
  width: 375px;
`;

const Tabs = styled.div`
  display: flex;
  align-items: center;
  gap: 24.5px;
  height: 65px;
  padding: 0 0 1.5px 25.5px;
  border-bottom: 1.5px solid #e6e6e6;
  letter-spacing: 0.1px;
`;

const Tab = styled.span`
  color: ${({ $active }) => ($active ? "#1e1e1e" : "#808080")};
  font-weight: ${({ $active }) => ($active ? 600 : 500)};
`;

const SearchRow = styled.div`
  display: flex;
  align-items: center;
  height: 64px;
  padding-left: 25px;
  border-bottom: 2px solid #e6e6e6;
  color: #757575;
`;

const SearchText = styled.span`
  width: 228px;
  margin-left: 12px;
  letter-spacing: 0.1px;
`;

const SlidersBox = styled.span`
  margin-left: 27px;
`;

const Hint = styled.div`
  display: flex;
  gap: 14px;
  padding: 25px 0 0 25.5px;
  line-height: 25.5px;
  white-space: nowrap;

  p { margin: 0; }
`;

const HintIcon = styled.span`
  padding-top: 2px;
`;

const HelpButton = styled.button`
  position: absolute;
  right: 31px;
  bottom: 32px;
  width: 57px;
  height: 57px;
  padding: 0;
  border: 0;
  border-radius: 50%;
  background: #1e1e1e;
  color: #fff;
  font: 200 31px/57px Inter, sans-serif;
`;

export default function App() {
  return (
    <Page>
      <GlobalStyle />
      <Window>
        <TabBar>
          <Lights><Light /><Light /><Light /></Lights>
          <HomeTab>
            <svg width="21" height="23" viewBox="0 0 21 23" fill="#c8c8c8"><path d="M10.5 0L20.5 9V23H13.8V14H7.2V23H0.5V9Z" /></svg>
          </HomeTab>
          <FileTab>
            <FileBadge>
              <svg width="17" height="17" viewBox="0 0 17 17" fill="none" stroke="#fff" strokeWidth="1.5" strokeLinejoin="round">
                <path d="M2.6 2.4C6.4 1.8 10 3 11.6 5.8C12.6 7.6 12.8 9.4 12.4 11L10.4 12.8C7.6 12.6 5.4 11.4 4 9.4C2.8 7.4 2.4 5 2.6 2.4ZM2.8 2.6L7.2 7.4" />
                <circle cx="8" cy="8.2" r="1.1" /><path d="M10.8 14L13.6 11.4L14.8 12.6L12 15.2Z" strokeWidth="1.2" />
              </svg>
            </FileBadge>
            <FileName>Merge — Web &amp; Mobile Wireframes UI Kit</FileName>
            <svg width="14" height="22" viewBox="0 0 14 22" fill="none" stroke="#c8c8c8" strokeWidth="2.2"><path d="M1.2 5.2L12.8 16.8M12.8 5.2L1.2 16.8" /></svg>
          </FileTab>
          <NewTab>
            <svg width="17" height="17" viewBox="0 0 17 17" stroke="#c8c8c8" strokeWidth="2"><path d="M8.5 0.5V16.5M0.5 8.5H16.5" /></svg>
          </NewTab>
          <MoreTabs><Dot /><Dot /><Dot /></MoreTabs>
        </TabBar>

        <Toolbar>
          <Tools>
            <MenuButton><Figma size={31} strokeWidth={1.25} /><Chevron /></MenuButton>
            <Tool $active>
              <svg width="22" height="26" viewBox="0 0 22 26" fill="none" stroke="#fff" strokeWidth="1.7"><path d="M1.5 1.5L20.5 13L11.2 15.2L6 24Z" /></svg>
            </Tool>
            <Tool><Hand size={34} strokeWidth={1.15} /></Tool>
            <Tool><Bubble /></Tool>
          </Tools>
          <FileTitle>
            Merge — Web &amp; Mobile Wire...
            <Chevron />
            <ViewOnly>View only</ViewOnly>
          </FileTitle>
          <Actions>
            <svg width="30" height="28" viewBox="0 0 30 28" fill="none" stroke="#fff" strokeWidth="1.6">
              <path d="M1 24V14.5A14 13.5 0 0 1 29 14.5V24M1 18C1 16.6 2 15.8 3.4 15.8H6.2C7.4 15.8 8.2 16.6 8.2 17.8V25.2C8.2 26.4 7.4 27.2 6.2 27.2H4.2C2.4 27.2 1 26 1 24M29 18C29 16.6 28 15.8 26.6 15.8H23.8C22.6 15.8 21.8 16.6 21.8 17.8V25.2C21.8 26.4 22.6 27.2 23.8 27.2H25.8C27.6 27.2 29 26 29 24" />
            </svg>
            <Avatar>A</Avatar>
            <ShareButton>Share</ShareButton>
            <svg width="16" height="20" viewBox="0 0 16 20" fill="none" stroke="#fff" strokeWidth="1.6"><path d="M1 1.6L14.6 10L1 18.4Z" /></svg>
            <Zoom>5%</Zoom>
            <Chevron />
          </Actions>
        </Toolbar>

        <Body>
          <LeftPanel>
            <Pages>
              <Row $bold>
                <RowIcon $faint><Magnifier size={18} weight={1.9} /></RowIcon>
                Pages
                <PagesToggle><Chevron up /></PagesToggle>
              </Row>
              {pages.map((page) => (
                <Row key={page.name} $current={page.current}>
                  <RowIcon>
                    {page.current && <svg width="13" height="12" viewBox="0 0 14 12" fill="none" stroke="#1e1e1e" strokeWidth="2.6"><path d="M1 5.8L4.8 9.6L12.4 1.2" /></svg>}
                  </RowIcon>
                  {page.icon && <PageIcon kind={page.icon} />}
                  <RowName $icon={page.icon}>{page.name}</RowName>
                </Row>
              ))}
            </Pages>
            {layers.map((name) => {
              const hidden = name === "Frame 10";
              return (
                <Row key={name} $bold $layer $muted={hidden}>
                  <RowIcon>{hidden ? <BarsIcon /> : <HashIcon />}</RowIcon>
                  {name}
                </Row>
              );
            })}
          </LeftPanel>

          <Canvas>
            <BoardRow>
              {boards.map(([label, title, w, h, left, Art]) => (
                <Board key={label}>
                  <BoardName style={{ width: w }}>{label}</BoardName>
                  <BoardArt width={w} height={h} viewBox={`0 0 ${w * 3} ${h * 3}`}>
                    <defs>
                      <linearGradient id={"top-" + left}><stop offset="0" stopColor="#44506f" /><stop offset="1" stopColor="#68738a" /></linearGradient>
                    </defs>
                    <rect width={w * 3} height="20" fill={`url(#top-${left})`} />
                    <text x="16" y="11" fontSize="7.2" fontWeight="700" fill="#fff">{title}</text>
                    <Copy x={16} y={14} w={30} c="#fff" o={0.35} h={2} />
                    <Copy x={w * 3 - 33} y={10.5} w={18} c="#fff" o={0.45} h={3.5} />
                    <g transform={`translate(${-left} -102)`}><Art /></g>
                  </BoardArt>
                </Board>
              ))}
            </BoardRow>
          </Canvas>

          <RightPanel>
            <Tabs>
              <Tab $active>Comment</Tab>
              <Tab>Inspect</Tab>
              <Tab>Export</Tab>
            </Tabs>
            <SearchRow>
              <Magnifier />
              <SearchText>Search</SearchText>
              <svg width="27" height="27" viewBox="0 0 27 27" fill="none" stroke="#1e1e1e" strokeWidth="1.7">
                <circle cx="13.5" cy="13.5" r="12.3" /><path d="M7.2 9.2H19.8M8.8 13.5H18.2M10.6 17.8H16.4" />
              </svg>
              <SlidersBox>
                <svg width="20" height="24" viewBox="0 0 20 24" fill="none" stroke="#1e1e1e" strokeWidth="1.7">
                  <path d="M4.4 1V12.8M4.4 19.6V23M15.6 1V4.6M15.6 11.4V23" /><circle cx="4.4" cy="16.2" r="3.3" /><circle cx="15.6" cy="8" r="3.3" />
                </svg>
              </SlidersBox>
            </SearchRow>
            <Hint>
              <HintIcon><Bubble /></HintIcon>
              <p>
                Give feedback, ask a question, or<br />
                just leave a note of appreciation.<br />
                Click anywhere in the file to leave<br />
                a comment.
              </p>
            </Hint>
          </RightPanel>
        </Body>
        <BottomShade />
        <HelpButton>?</HelpButton>
      </Window>
    </Page>
  );
}
